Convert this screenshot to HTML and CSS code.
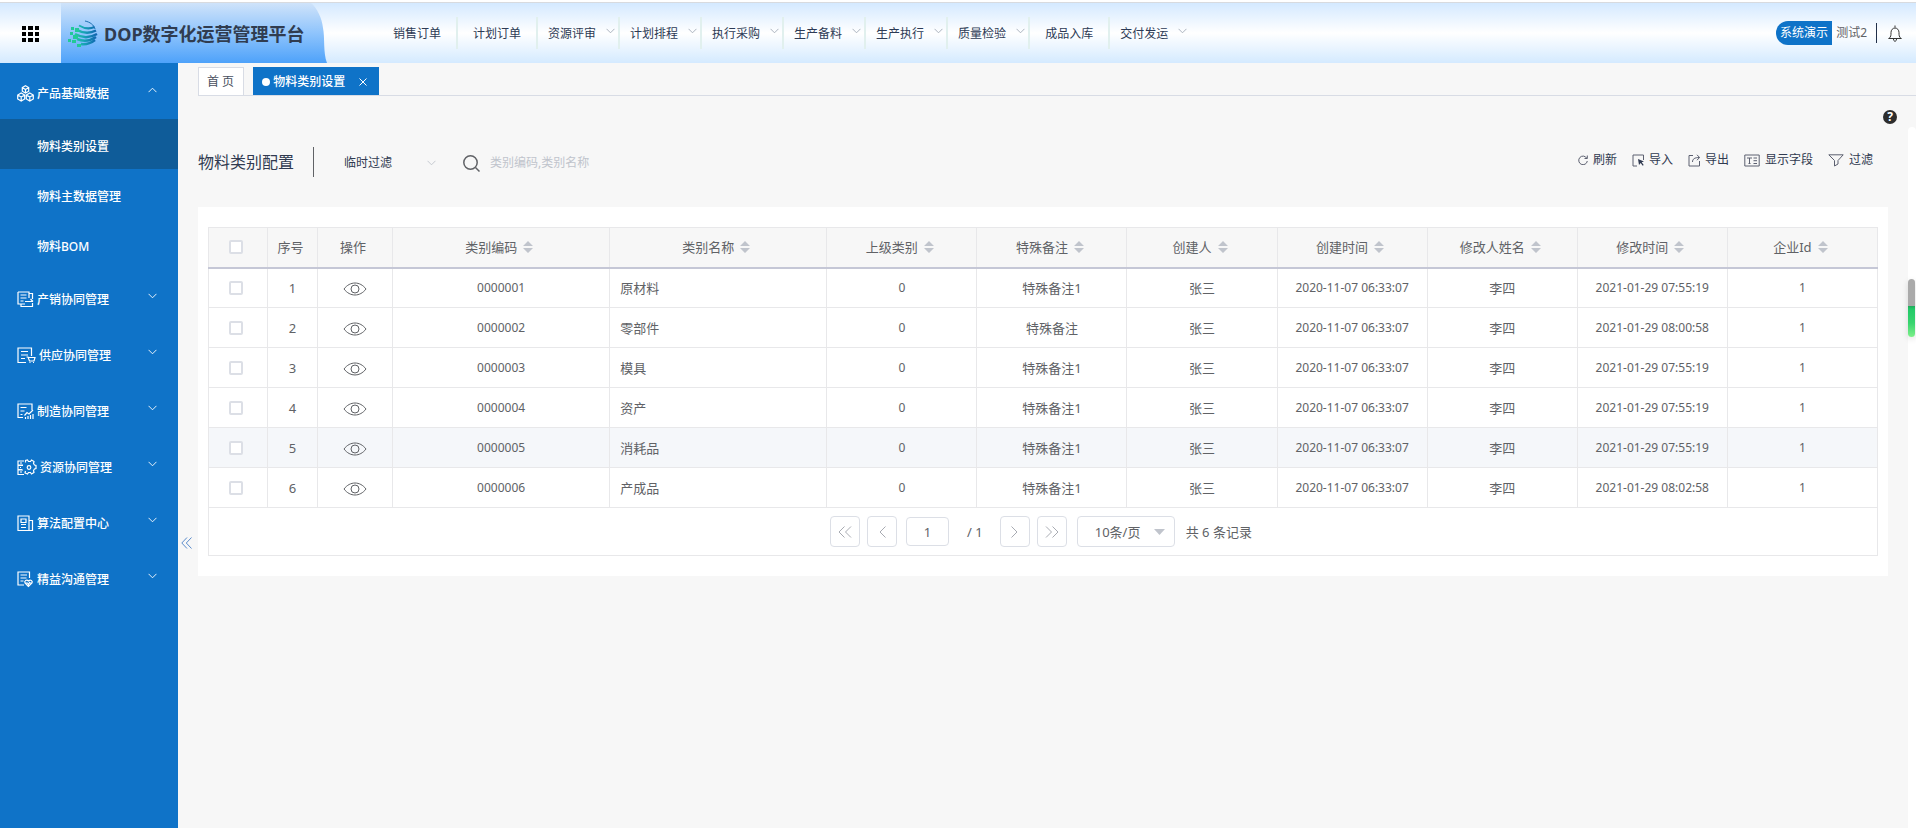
FILE: index.html
```html
<!DOCTYPE html>
<html lang="zh-CN">
<head>
<meta charset="utf-8">
<title>DOP数字化运营管理平台</title>
<link rel="stylesheet" href="styles.css">
</head>
<body>
<svg class="defs" aria-hidden="true">
  <symbol id="down" viewBox="0 0 10 6"><path d="M.6.6 5 5 9.400.6"/></symbol>
  <symbol id="sort" viewBox="0 0 10 12"><path d="M5 0 10 5H0zM0 7h10l-5 5z"/></symbol>
  <symbol id="eye" viewBox="0 0 24 14"><path d="M1 7C4 3 8 1 12 1s8 2 11 6c-3 4-7 6-11 6S4 11 1 7z"/><circle cx="12" cy="7" r="4"/></symbol>
</svg>
<header class="topbar">
  <button class="apps" aria-label="应用">
    <svg width="17" height="16" viewBox="0 0 17 16"><path d="M0 0h4v4H0zM6 0h5v4H6zM13 0h4v4h-4zM0 6h4v4H0zM6 6h5v4H6zM13 6h4v4h-4zM0 12h4v4H0zM6 12h5v4H6zM13 12h4v4h-4z"/></svg>
  </button>
  <div class="brand">
    <svg class="logo" width="30" height="28" viewBox="0 0 30 28">
      <defs><linearGradient id="lg" gradientUnits="userSpaceOnUse" x1="4" x2="29"><stop offset="0" stop-color="#2bd09a"/><stop offset=".45" stop-color="#18a7b5"/><stop offset="1" stop-color="#0f62b0"/></linearGradient></defs>
      <g fill="none" stroke="url(#lg)">
        <path d="M17 1c5 1 9 4 10 8" stroke="#1a6fb0" stroke-width="1"/>
        <path d="M11 5.500c5 3 10 4 15.500 1.500" stroke-width="2"/>
        <path d="M8 9.500c7 4 13 4.500 20 1" stroke-width="2.500"/>
        <path d="M7 14c7 4 15 4 22 0" stroke-width="2.500"/>
        <path d="M9 19c7 3 13 2 19-2" stroke-width="2.500"/>
        <path d="M13 24c6 1 10-1 14-4" stroke-width="2.500"/>
      </g>
      <path fill="#22c998" d="M3 7h3v3H3zM7 8h4v4H7zM2 12h3v3H2zM5 15h5v4H5zM0 19h3v3H0zM4 20h4v3H4zM9 24h4v3H9z"/>
    </svg>
    <h1>DOP数字化运营管理平台</h1>
  </div>
  <nav class="nav">
    <a href="#">销售订单</a>
    <a href="#">计划订单</a>
    <a href="#" class="more">资源评审<svg><use href="#down"/></svg></a>
    <a href="#" class="more">计划排程<svg><use href="#down"/></svg></a>
    <a href="#" class="more">执行采购<svg><use href="#down"/></svg></a>
    <a href="#" class="more">生产备料<svg><use href="#down"/></svg></a>
    <a href="#" class="more">生产执行<svg><use href="#down"/></svg></a>
    <a href="#" class="more">质量检验<svg><use href="#down"/></svg></a>
    <a href="#">成品入库</a>
    <a href="#" class="more">交付发运<svg><use href="#down"/></svg></a>
  </nav>
  <div class="user">
    <span class="env">系统演示</span>
    <span class="name">测试2</span>
    <button class="bell" aria-label="通知">
      <svg width="14" height="17" viewBox="0 0 14 17" fill="none" stroke="#333"><path d="M7 .5v2M.5 13.500h13M1 13.500c2-2 2-3 2-6a4 4.500 0 0 1 8 0c0 3 0 4 2 6M5.500 14c0 3 3 3 3 0"/></svg>
    </button>
  </div>
</header>
<div class="shell">
  <aside class="sidebar">
    <a href="#" class="group">
      <svg width="17" height="17" viewBox="0 0 17 17"><path d="m8.500.8 3.200 1.800v3.600L8.500 8 5.300 6.200V2.600zM8.500 4.500V8M5.300 2.600l3.200 1.900 3.200-1.900M4.200 8l3.500 2v4l-3.500 2-3.500-2v-4zM4.200 12v4M.7 10l3.500 2 3.500-2M12.800 8l3.500 2v4l-3.500 2-3.500-2v-4zM12.800 12v4M9.300 10l3.500 2 3.500-2"/></svg>
      <span>产品基础数据</span><svg class="arrow up"><use href="#down"/></svg></a>
    <a href="#" class="sub current">物料类别设置</a>
    <a href="#" class="sub">物料主数据管理</a>
    <a href="#" class="sub">物料BOM</a>
    <a href="#" class="group">
      <svg width="17" height="17" viewBox="0 0 17 17"><path d="M1 1h11v6M1 1v12h7M3.500 4h6M3.500 7h6M3.500 10h3M12 2.500h3.500V8M4 13v2.500h11.500V12M8 10.500h8M13.500 8l2.500 2.500"/></svg>
      <span>产销协同管理</span><svg class="arrow"><use href="#down"/></svg></a>
    <a href="#" class="group">
      <svg width="19" height="17" viewBox="0 0 19 17"><path d="M9 15.500H1V1h13.500v8M4 4.500h7M4 8h7M4 11.500h4M9.500 10H11l1.500 4h4.500l1-3.500h-6.500"/><path d="M12.500 15.500h1M16 15.500h1"/></svg>
      <span>供应协同管理</span><svg class="arrow"><use href="#down"/></svg></a>
    <a href="#" class="group">
      <svg width="17" height="17" viewBox="0 0 17 17"><path d="M6 14.500H1V1h14v6M3.500 4.500h6M3.500 8h4M3.500 11.500h2M7.500 12.500 10 9.500l2 1.500 4-4M8.500 16v-2M11 16v-3M13.500 16v-4M16 16v-5"/></svg>
      <span>制造协同管理</span><svg class="arrow"><use href="#down"/></svg></a>
    <a href="#" class="group">
      <svg width="20" height="17" viewBox="0 0 20 17"><path d="M7 2H1v4h5M6 6.500H1v4h4M6 11H1v4.500h6M3 4h2M3 8.500h1M3 13h2M8.500 3.500V1.500l2-.5 1 1.500h2l1-1.500 2.500 1.500-.5 2 1 1.500 1.500.5v3l-1.500.5-1 1.500.5 2-2.500 1.500-1-1.500h-2l-1 1.500-2.500-1 .5-2"/><circle cx="12" cy="8.500" r="1.800"/></svg>
      <span>资源协同管理</span><svg class="arrow"><use href="#down"/></svg></a>
    <a href="#" class="group">
      <svg width="17" height="17" viewBox="0 0 17 17"><path d="M1 1h11v14.500H1zM12 5.500h3.500v10H12M4 4h5v3.500H4zM4 9.500h5M4 12.500h5"/></svg>
      <span>算法配置中心</span><svg class="arrow"><use href="#down"/></svg></a>
    <a href="#" class="group">
      <svg width="17" height="17" viewBox="0 0 17 17"><path d="M7 14H1V1h11.500v6M3.500 4h6.500M3.500 7h6M3.500 10h3M11.500 15.500 8 12c-1-2 1.500-4 3.500-2 2-2 4.500 0 3.500 2zM8.500 12h2l1 1.500 1-2 .5.500h1.500"/></svg>
      <span>精益沟通管理</span><svg class="arrow"><use href="#down"/></svg></a>
  </aside>
  <div class="gutter">
    <button class="collapse" aria-label="收起菜单"><svg width="11" height="12" viewBox="0 0 11 12" fill="none" stroke="#5a8bcb"><path d="M6 .5.800 6 6 11.500M10.500.5 5.300 6l5.200 5.500"/></svg></button>
  </div>
  <main class="main">
    <div class="tabs">
      <a href="#" class="tab">首 页</a>
      <a href="#" class="tab active"><i class="dot"></i>物料类别设置<svg width="8" height="8" viewBox="0 0 8 8" stroke="#fff"><path d="m.5.5 7 7M7.500.5l-7 7"/></svg></a>
    </div>
    <div class="body">
      <div class="page">
        <div class="helpline">
          <button class="help" aria-label="帮助">?</button>
        </div>
        <div class="toolbar">
          <h2>物料类别配置</h2>
          <label class="filter">
            <select aria-label="临时过滤"><option>临时过滤</option></select>
            <svg><use href="#down"/></svg>
          </label>
          <label class="search">
            <svg width="17" height="17" viewBox="0 0 17 17" fill="none" stroke="#606266" stroke-width="1.500"><circle cx="7.500" cy="7.500" r="6.700"/><path d="m12.500 12.500 4 4"/></svg>
            <input type="text" placeholder="类别编码,类别名称" aria-label="搜索">
          </label>
          <div class="actions">
            <button><svg width="10" height="10" viewBox="0 0 10 10"><path d="M8.800 3.300A4.300 4.300 0 1 0 9.300 6M9.300.5v3H6.500"/></svg>刷新</button>
            <button><svg width="12" height="13" viewBox="0 0 12 13"><path d="M5 12H1V1h10.500v5"/><path class="solid" d="m6 5 6 2.500-2.300.8 2 2.700-1 .7-2-2.700L7 11z"/></svg>导入</button>
            <button><svg width="12" height="13" viewBox="0 0 12 13"><path d="M5 1.500H1V12h10.500V7M4.500 8c0-3 2-4.500 7-4.500M9 .8l2.600 2.700L9 6.200"/></svg>导出</button>
            <button><svg width="16" height="13" viewBox="0 0 16 13"><path d="M.8 1h14.400v11H.8zM3 4h5M5.500 4v5.500M4.500 9.500h2M9.500 4H13M9.500 6.700H13M9.500 9.500H13"/></svg>显示字段</button>
            <button><svg width="16" height="13" viewBox="0 0 16 13"><path d="M.8.8h14.400L10 6.500V10l-3.500 2V6.500z"/></svg>过滤</button>
          </div>
        </div>
        <section class="card">
          <table class="grid">
            <colgroup><col class="c-check"><col class="c-no"><col class="c-op"><col class="c-wide"><col class="c-wide"><col><col><col><col><col><col><col></colgroup>
            <thead><tr>
              <th><input type="checkbox" aria-label="全选"></th><th>序号</th><th>操作</th>
              <th>类别编码<svg><use href="#sort"/></svg></th><th>类别名称<svg><use href="#sort"/></svg></th><th>上级类别<svg><use href="#sort"/></svg></th><th>特殊备注<svg><use href="#sort"/></svg></th><th>创建人<svg><use href="#sort"/></svg></th><th>创建时间<svg><use href="#sort"/></svg></th><th>修改人姓名<svg><use href="#sort"/></svg></th><th>修改时间<svg><use href="#sort"/></svg></th><th>企业Id<svg><use href="#sort"/></svg></th>
            </tr></thead>
            <tbody>
              <tr><td><input type="checkbox" aria-label="选择1"></td><td>1</td><td><svg class="eye"><use href="#eye"/></svg></td><td class="num">0000001</td><td class="left">原材料</td><td class="num">0</td><td>特殊备注1</td><td>张三</td><td class="num">2020-11-07 06:33:07</td><td>李四</td><td class="num">2021-01-29 07:55:19</td><td class="num">1</td></tr>
              <tr><td><input type="checkbox" aria-label="选择2"></td><td>2</td><td><svg class="eye"><use href="#eye"/></svg></td><td class="num">0000002</td><td class="left">零部件</td><td class="num">0</td><td>特殊备注</td><td>张三</td><td class="num">2020-11-07 06:33:07</td><td>李四</td><td class="num">2021-01-29 08:00:58</td><td class="num">1</td></tr>
              <tr><td><input type="checkbox" aria-label="选择3"></td><td>3</td><td><svg class="eye"><use href="#eye"/></svg></td><td class="num">0000003</td><td class="left">模具</td><td class="num">0</td><td>特殊备注1</td><td>张三</td><td class="num">2020-11-07 06:33:07</td><td>李四</td><td class="num">2021-01-29 07:55:19</td><td class="num">1</td></tr>
              <tr><td><input type="checkbox" aria-label="选择4"></td><td>4</td><td><svg class="eye"><use href="#eye"/></svg></td><td class="num">0000004</td><td class="left">资产</td><td class="num">0</td><td>特殊备注1</td><td>张三</td><td class="num">2020-11-07 06:33:07</td><td>李四</td><td class="num">2021-01-29 07:55:19</td><td class="num">1</td></tr>
              <tr class="hover"><td><input type="checkbox" aria-label="选择5"></td><td>5</td><td><svg class="eye"><use href="#eye"/></svg></td><td class="num">0000005</td><td class="left">消耗品</td><td class="num">0</td><td>特殊备注1</td><td>张三</td><td class="num">2020-11-07 06:33:07</td><td>李四</td><td class="num">2021-01-29 07:55:19</td><td class="num">1</td></tr>
              <tr><td><input type="checkbox" aria-label="选择6"></td><td>6</td><td><svg class="eye"><use href="#eye"/></svg></td><td class="num">0000006</td><td class="left">产成品</td><td class="num">0</td><td>特殊备注1</td><td>张三</td><td class="num">2020-11-07 06:33:07</td><td>李四</td><td class="num">2021-01-29 08:02:58</td><td class="num">1</td></tr>
            </tbody>
          </table>
          <div class="pager">
            <button aria-label="首页"><svg width="14" height="12" viewBox="0 0 14 12"><path d="M6.500.5 1 6l5.500 5.500M13 .5 7.500 6l5.500 5.500"/></svg></button>
            <button aria-label="上一页"><svg width="7" height="12" viewBox="0 0 7 12"><path d="M6.500.5 1 6l5.500 5.500"/></svg></button>
            <input type="text" value="1" aria-label="页码">
            <span class="total-pages">/ 1</span>
            <button aria-label="下一页"><svg width="7" height="12" viewBox="0 0 7 12"><path d="M.5.5 6 6 .5 11.500"/></svg></button>
            <button aria-label="末页"><svg width="14" height="12" viewBox="0 0 14 12"><path d="M1 .5 6.500 6 1 11.500M7.500.5 13 6l-5.500 5.500"/></svg></button>
            <label class="size">
              <select aria-label="每页条数"><option>10条/页</option></select>
              <svg width="11" height="6" viewBox="0 0 11 6"><path d="M0 0h11L5.500 6z"/></svg>
            </label>
            <span class="count">共 6 条记录</span>
          </div>
        </section>
      </div>
      <div class="rail"><div class="meter"></div></div>
    </div>
  </main>
</div>
</body>
</html>
```
FILE: styles.css
```css
* { box-sizing: border-box; }

body {
  margin: 0;
  min-height: 100vh;
  display: flex;
  flex-direction: column;
  background: #f7f7f7;
  color: #606266;
  font: 12px/20px "Noto Sans", "Noto Sans CJK SC", sans-serif;
}

a { color: inherit; text-decoration: none; }
svg { flex: none; }
h1, h2 { margin: 0; }
.defs { position: absolute; width: 0; height: 0; }

button, input, select { font: inherit; color: inherit; }
button { padding: 0; border: 0; background: none; cursor: pointer; }
select { appearance: none; border: 0; outline: 0; background: none; }

/* top bar */
.topbar {
  display: flex;
  height: 63px;
  border-top: 3px solid #dcdcdc;
  border-image: linear-gradient(#fff 2px, #d8dade 2px) 3 0 0 0;
  background: linear-gradient(#d4e9ff, #fff 50%, #d4eaff);
}
.apps { width: 61px; padding: 2px 0 0 22px; display: flex; align-items: center; }
.brand {
  width: 266px;
  padding: 2px 0 0 7px;
  display: flex;
  align-items: center;
  gap: 6px;
  background: linear-gradient(#cfe3fa, #8fc4fc 50%, #4ea2fa);
  clip-path: path("M0 0H250C256 5 261 15 262 25C264 34 262 50 266 60H0Z");
}
.brand h1 { color: #303c50; font-size: 18px; line-height: 24px; white-space: nowrap; }
.nav { display: flex; align-items: center; margin-left: 51px; color: #2c3a55; white-space: nowrap; }
.nav a { display: flex; align-items: center; height: 32px; padding: 2px 15px 0; border-right: 2px solid #e1f0ee; }
.nav a.more { padding: 2px 3px 0 10px; gap: 10px; }
.nav a:last-child { border: 0; }
.nav svg { width: 9px; height: 6px; margin-bottom: 6px; overflow: visible; fill: none; stroke: #a3abb8; }
.user { margin-left: auto; padding-right: 14px; display: flex; align-items: center; white-space: nowrap; }
.env { padding: 2px 4px; border-radius: 12px 0 0 12px; background: #0f73c8; color: #fff; }
.name { padding: 0 9px 0 4px; }
.bell { height: 20px; padding-left: 11px; border-left: 1px solid #22304a; display: flex; align-items: center; }

/* side menu */
.shell { flex: 1; display: flex; }
.sidebar { width: 178px; flex: none; background: #0f73c8; color: #fff; font-weight: 500; }
.group { display: flex; align-items: center; gap: 3px; height: 56px; padding: 5px 21px 0 17px; }
.group svg { fill: none; stroke: #fff; stroke-width: 1.2; }
.group .arrow { width: 9px; height: 6px; margin: 0 0 7px auto; overflow: visible; stroke-width: 1; }
.arrow.up { transform: rotate(180deg); }
.sub { display: flex; align-items: center; height: 50px; padding: 5px 0 0 37px; }
.sub.current { background: #0f5c99; }
.gutter { position: relative; width: 20px; flex: none; }
.collapse { position: absolute; top: 62%; left: 3px; display: flex; }

/* tabs */
.main { flex: 1; min-width: 0; display: flex; flex-direction: column; }
.tabs { display: flex; gap: 9px; padding-top: 4px; border-bottom: 1px solid #d8dce5; }
.tab { display: flex; align-items: center; height: 28px; padding: 0 8px; border: 1px solid #d8dce5; border-bottom: 0; background: #fff; color: #495060; }
.tab:first-child { padding: 0 9px 0 8px; }
.tab.active { padding: 0 11px 0 8px; border-color: #0f73c8; background: #0f73c8; color: #fff; font-weight: 500; }
.tab svg { margin-left: 14px; }
.dot { width: 8px; height: 8px; margin-right: 3px; border-radius: 50%; background: #fff; }

.body { flex: 1; display: flex; }
.page { flex: 1; min-width: 0; padding-right: 20px; }
.rail { width: 8px; margin-top: 31px; border-radius: 4px 4px 0 0; background: #fff; }
.meter {
  width: 7px;
  height: 58px;
  margin-top: 152px;
  border-radius: 4px;
  background: linear-gradient(#aaa 27px, #1faa5b 27px, #22c968 30px, #38d46f 44px, #7df08a);
  box-shadow: 0 2px 6px #0002;
}

/* page toolbar */
.helpline { display: flex; justify-content: flex-end; padding: 14px 11px 0 0; margin-right: -20px; }
.help { width: 14px; height: 14px; border-radius: 50%; background: #2d2d2d; color: #fff; font-weight: 700; line-height: 14px; }
.toolbar { display: flex; align-items: center; height: 76px; margin-bottom: 7px; }
.toolbar h2 { padding-right: 19px; border-right: 1px solid #606266; color: #303a50; font-size: 16px; font-weight: 400; line-height: 30px; }
.filter, .search { display: flex; align-items: center; margin-top: 2px; }
.filter { margin-left: 30px; width: 92px; color: #303a50; }
.filter select { flex: 1; padding: 0; }
.filter svg { width: 9px; height: 6px; overflow: visible; fill: none; stroke: #c0c4cc; }
.search { margin-left: 27px; gap: 10px; }
.search input { width: 200px; padding: 0; border: 0; outline: 0; background: none; }
.search input::placeholder { color: #c0c4cc; }
.actions { display: flex; gap: 15px; margin: 0 15px 4px auto; color: #303a50; }
.actions button { display: flex; align-items: center; gap: 5px; }
.actions svg { fill: none; stroke: #5c6070; }
.actions .solid { fill: #303a50; stroke: none; }

/* table */
.card { padding: 20px 10px; background: #fff; }
.grid { width: 100%; table-layout: fixed; border-collapse: collapse; font-size: 13px; }
.c-check { width: 59px; }
.c-no { width: 50px; }
.c-op { width: 75px; }
.c-wide { width: 217px; }
col { width: 150px; }
.grid th, .grid td { height: 40px; padding: 0; border: 1px solid #e8e8ea; text-align: center; font-weight: 400; vertical-align: middle; }
.grid th { padding-right: 4px; background: #f7f7f7; border-bottom: 2px solid #c5c7d6; }
.grid td.left { padding-left: 10px; text-align: left; }
.grid td.num { font-size: 12px; }
.grid td:first-child { padding-right: 4px; }
.grid tr.hover { background: #f5f7fa; }
.grid th svg { width: 10px; height: 12px; margin-left: 6px; vertical-align: -1px; fill: #c0c4cc; }
.grid .eye { width: 24px; height: 14px; vertical-align: middle; fill: none; stroke: #606266; }
.grid input { appearance: none; display: block; width: 14px; height: 14px; margin: 0 auto; border: 2px solid #dcdfe6; border-radius: 2px; background: #fff; }

/* pager */
.pager { display: flex; align-items: center; justify-content: center; height: 48px; padding-right: 4px; border: 1px solid #e8e8ea; border-top: 0; font-size: 13px; }
.pager button { width: 30px; height: 31px; margin-right: 7px; border: 1px solid #dcdfe6; border-radius: 4px; display: flex; align-items: center; justify-content: center; }
.pager button svg { fill: none; stroke: #a8abb2; }
.pager input { width: 43px; height: 29px; margin-left: 2px; padding: 0; border: 1px solid #dcdfe6; border-radius: 4px; text-align: center; }
.total-pages { padding: 0 17px 0 18px; }
.size { display: flex; align-items: center; width: 98px; height: 31px; margin: 0 11px 0 3px; padding: 0 9px 0 17px; border: 1px solid #dcdfe6; border-radius: 4px; }
.size select { flex: 1; padding: 0; }
.size svg { fill: #c0c4cc; }
```
